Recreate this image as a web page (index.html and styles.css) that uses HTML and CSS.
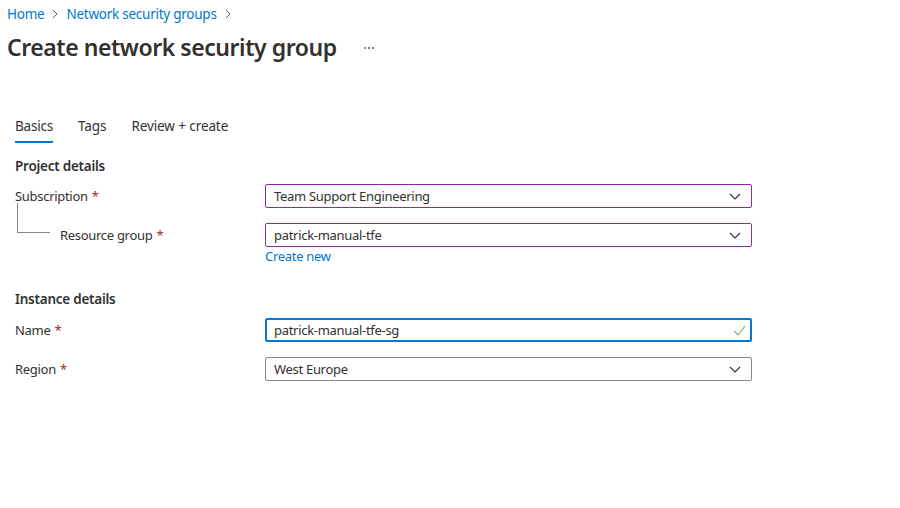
FILE: index.html
```html
<!DOCTYPE html>
<html>
<head>
<meta charset="utf-8">
<link rel="stylesheet" href="styles.css">
</head>
<body>
<div class="page">
  <nav class="crumbs">
    <a class="link">Home</a>
    <span class="sep"><svg width="8" height="10" viewBox="0 0 8 10"><path d="M2 1l4 4-4 4" fill="none" stroke="#605e5c" stroke-width="1"/></svg></span>
    <a class="link">Network security groups</a>
    <span class="sep"><svg width="8" height="10" viewBox="0 0 8 10"><path d="M2 1l4 4-4 4" fill="none" stroke="#605e5c" stroke-width="1"/></svg></span>
  </nav>
  <header class="titlebar">
    <h1 class="title">Create network security group</h1>
    <span class="more"><i></i><i></i><i></i></span>
  </header>

  <div class="form">
    <div class="tabs">
      <span class="tab active">Basics</span>
      <span class="tab">Tags</span>
      <span class="tab">Review + create</span>
    </div>

    <h2 class="section">Project details</h2>
    <div class="row">
      <label class="label">Subscription <span class="req">*</span></label>
      <div class="field">
        <div class="input select modified">Team Support Engineering<svg class="chev" width="12" height="7" viewBox="0 0 12 7"><path d="M1 1l5 5 5-5" fill="none" stroke="#323130" stroke-width="1.1"/></svg></div>
      </div>
    </div>
    <div class="row sub">
      <label class="label nested"><span class="tree"></span>Resource group <span class="req">*</span></label>
      <div class="field">
        <div class="input select modified">patrick-manual-tfe<svg class="chev" width="12" height="7" viewBox="0 0 12 7"><path d="M1 1l5 5 5-5" fill="none" stroke="#323130" stroke-width="1.1"/></svg></div>
        <a class="link create">Create new</a>
      </div>
    </div>

    <h2 class="section inst">Instance details</h2>
    <div class="row name">
      <label class="label">Name <span class="req">*</span></label>
      <div class="field">
        <div class="input focused">patrick-manual-tfe-sg<svg class="check" width="13" height="11" viewBox="0 0 13 11"><path d="M1 6l4 4 7-9" fill="none" stroke="#6bb26b" stroke-width="1.1"/></svg></div>
      </div>
    </div>
    <div class="row region">
      <label class="label">Region <span class="req">*</span></label>
      <div class="field">
        <div class="input select">West Europe<svg class="chev" width="12" height="7" viewBox="0 0 12 7"><path d="M1 1l5 5 5-5" fill="none" stroke="#323130" stroke-width="1.1"/></svg></div>
      </div>
    </div>
  </div>
</div>
</body>
</html>
```
FILE: styles.css
```css
html, body {
  margin: 0;
  padding: 0;
  background: #fff;
}
body {
  font-family: "Noto Sans", "Liberation Sans", sans-serif;
  font-size: 13px;
  letter-spacing: -0.3px;
  color: #323130;
}
.page {
  width: 900px;
  height: 508px;
}
.link {
  color: #0078d4;
  text-decoration: none;
}
.crumbs {
  display: flex;
  align-items: center;
  gap: 7px;
  padding: 4px 0 0 7px;
  height: 20px;
  font-size: 13.5px;
  letter-spacing: -0.25px;
}
.sep {
  display: flex;
  align-items: center;
}
.titlebar {
  display: flex;
  align-items: center;
  padding-left: 7px;
  height: 32px;
  margin-top: 7px;
}
.title {
  margin: 0;
  font-size: 23px;
  font-weight: 600;
  letter-spacing: -0.45px;
}
.more {
  display: flex;
  gap: 2px;
  margin-left: 27px;
  margin-top: 2px;
}
.more i {
  width: 2px;
  height: 2px;
  background: #8a8886;
}
.form {
  padding-left: 15px;
  margin-top: 52px;
}
.tabs {
  display: flex;
  gap: 25px;
  height: 28px;
}
.tab {
  font-size: 13.5px;
  line-height: 18px;
  padding-top: 2px;
  box-sizing: border-box;
  letter-spacing: -0.1px;
}
.tab.active {
  border-bottom: 2px solid #0078d4;
  height: 28px;
  letter-spacing: -0.2px;
}
.section {
  margin: 13px 0 0 0;
  font-size: 13.5px;
  font-weight: 600;
  line-height: 20px;
  letter-spacing: -0.25px;
}
.section.inst {
  margin-top: 24px;
}
.row {
  display: flex;
  margin-top: 8px;
}
.row.sub {
  margin-top: 15px;
}
.row.name {
  margin-top: 9px;
}
.row.region {
  margin-top: 15px;
}
.label {
  width: 250px;
  display: flex;
  align-items: flex-start;
  line-height: 24px;
  position: relative;
}
.label.nested {
  padding-left: 45px;
  box-sizing: border-box;
}
.req {
  color: #a4262c;
  margin-left: 4px;
}
.tree {
  position: absolute;
  left: 2px;
  top: -20px;
  width: 32px;
  height: 29px;
  border-left: 1px solid #8a8886;
  border-bottom: 1px solid #8a8886;
}
.field {
  display: flex;
  flex-direction: column;
}
.input {
  width: 487px;
  height: 24px;
  box-sizing: border-box;
  border: 1px solid #8a8886;
  border-radius: 2px;
  display: flex;
  align-items: center;
  justify-content: space-between;
  padding: 0 8px 0 8px;
  line-height: 20px;
}
.input.modified {
  border-color: #8d2d9e;
}
.input.focused {
  border: 2px solid #0078d4;
  padding-left: 7px;
  padding-right: 4px;
}
.chev {
  margin-right: 2px;
}
.create {
  line-height: 18px;
  margin-top: 0;
}
```
